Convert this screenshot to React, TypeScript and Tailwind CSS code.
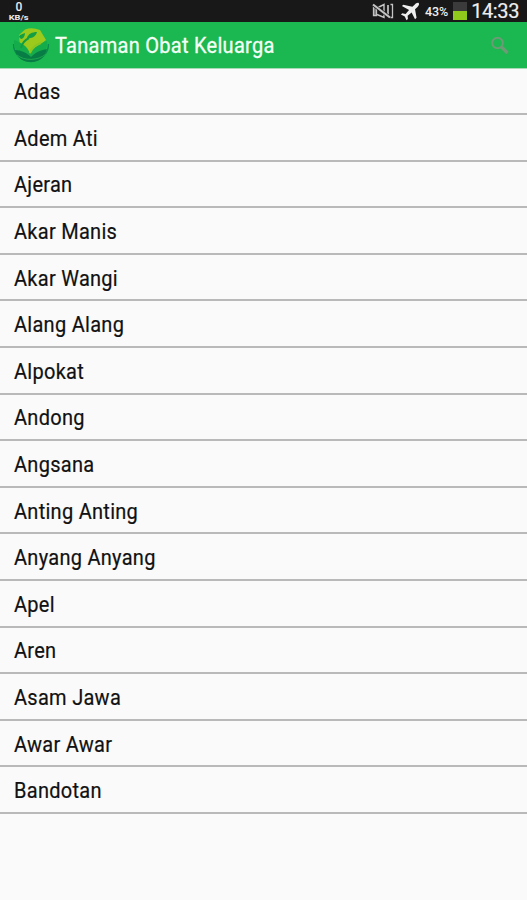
const plants = [
  'Adas', 'Adem Ati', 'Ajeran', 'Akar Manis', 'Akar Wangi', 'Alang Alang', 'Alpokat', 'Andong',
  'Angsana', 'Anting Anting', 'Anyang Anyang', 'Apel', 'Aren', 'Asam Jawa', 'Awar Awar', 'Bandotan',
];

function MutedIcon() {
  return (
    <svg className="ml-auto mt-[2px] h-[18px] w-[22px]" viewBox="0 0 22 18" fill="none" stroke="#c4c4c4">
      <path d="M1.500 4.500h3v9h-3z" fill="#777777" strokeWidth="1.300" />
      <path d="M5 6l7-3.500v13L5 12.500" strokeWidth="1.400" />
      <path d="M16 3v11" strokeWidth="1.700" />
      <path d="M18.500 2.500h2v13h-2" strokeWidth="1.300" />
      <path d="M1 2.500l17 13" stroke="#181818" strokeWidth="3.400" />
      <path d="M1 2.500l17 13" strokeWidth="2.200" />
    </svg>
  );
}

function PlaneIcon() {
  return (
    <svg className="ml-[6px] mt-[2px] h-[19px] w-5" viewBox="0 0 21 20" fill="#efefef">
      <path d="M19.800 1.200c-1.300-.9-3 .2-4.200 1.300L13 5 3.500 2.800 2 4.300l7.500 4.200-3.600 4-3.500-.6L1 13.200l4 2.100 1.800 4 1.500-1.300-.3-3.500 4.200-3.500 3.600 7.200 1.600-1.500-1.600-9 2.600-2.500c1.100-1.200 2.200-2.900 1.400-4Z" />
    </svg>
  );
}

function LeafLogo() {
  return (
    <svg className="ml-3 mt-px h-[38px] w-[38px] shrink-0" viewBox="0 0 38 38" fill="none">
      <path d="M1.500 17a17.500 17.500 0 1 0 35 0" stroke="#0b8b4d" strokeWidth="1.300" />
      <path d="M7 8L13 2.500Q20 0 28 3L34 13Q30 17 25 20L20 28Q14 25 8 20Z" fill="#9bc91c" />
      <path d="M2 13C8 15 16 19 18 27 22 20 28 16 35 14 36 20 33 29 19 31 7 31 1 23 2 13Z" fill="#15ad4b" />
      <path d="M3 23c6 0 12 3 16 7 5-5 10-7 16-8-2 8-8 13-16 13S5 31 3 23Z" fill="#087c45" />
      <path d="M15 11c1-4 5-6 10-6-1 4-5 7-10 6Z" fill="#149e43" />
      <path d="M7 10c0-2 3-3 6-4 0 3-2 6-4 6" fill="#149e43" />
      <path d="M9 21c1-5 4-8 8-10" stroke="#149e43" strokeWidth="2" />
      <path d="M18 26c2-6 6-8 11-10" stroke="#8cc520" strokeWidth="2" />
      <path d="M5 28c7 6 21 6 29-1" stroke="#1baa4c" />
    </svg>
  );
}

function StatusBar() {
  return (
    <div className="flex h-[22px] shrink-0 items-start bg-[#181818] pr-2 text-[#eeeeee]">
      <div className="ml-px flex h-[22px] w-9 flex-col items-center">
        <span className="text-[12px] font-medium leading-[14px]">0</span>
        <span className="scale-x-[1.15] text-[8px] font-bold leading-[8px]">KB/s</span>
      </div>
      <MutedIcon />
      <PlaneIcon />
      <span className="ml-[5px] w-[26px] whitespace-nowrap text-[12.500px] font-medium leading-[23px] tracking-[-0.100px]">43%</span>
      <div className="ml-[2px] mt-[2px] h-[18px] w-[14px] bg-[#3b3b3b] pt-[9px]">
        <div className="h-[9px] bg-[#8ec91b]" />
      </div>
      <span className="ml-[4px] w-[48px] whitespace-nowrap text-right text-[20px] leading-[23px] tracking-[-0.400px] [-webkit-text-stroke:0.200px_#eeeeee]">14:33</span>
    </div>
  );
}

function ActionBar() {
  return (
    <header className="flex h-[47px] shrink-0 items-center border-b border-[#a9d9b6] bg-[#1bb750]">
      <LeafLogo />
      <h1 className="ml-[5px] origin-left scale-x-[0.93] whitespace-nowrap pt-[2px] text-[21.500px] leading-6 tracking-[0.300px] text-[#f4fff6] [-webkit-text-stroke:0.300px_#f4fff6]">Tanaman Obat Keluarga</h1>
      <svg className="ml-auto mr-[17px] mt-[2px] h-5 w-5" viewBox="0 0 20 20" fill="none" stroke="#6d9b75">
        <circle cx="7.500" cy="7" r="5.300" strokeWidth="1.900" />
        <path d="M11.500 11l6 6" strokeWidth="3.200" />
      </svg>
    </header>
  );
}

export default function App() {
  return (
    <div className="flex h-[900px] w-full flex-col overflow-hidden bg-[#fafafa] font-[Roboto,sans-serif]">
      <StatusBar />
      <ActionBar />
      <ul className="-mt-[0.500px]">
        {plants.map((name) => (
          <li key={name} className="flex h-[46.600px] items-center border-b-2 border-[#b9b9b9] pl-[14px]">
            <span className="origin-left scale-x-[0.93] whitespace-nowrap pt-[3px] text-[21.500px] leading-6 tracking-[0.300px] text-[#111111] [-webkit-text-stroke:0.200px_#111111]">{name}</span>
          </li>
        ))}
      </ul>
    </div>
  );
}
